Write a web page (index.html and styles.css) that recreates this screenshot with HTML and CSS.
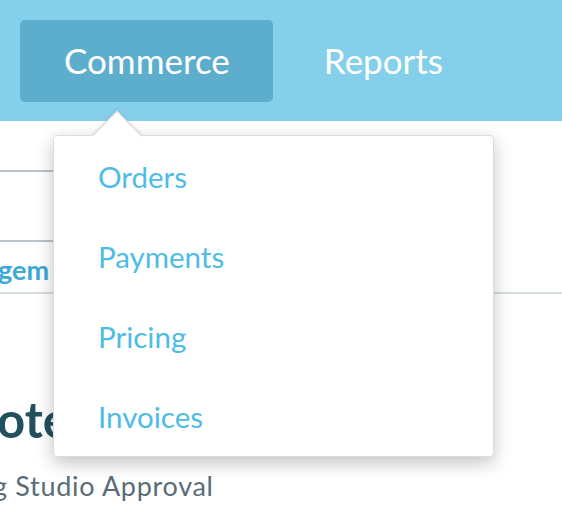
FILE: index.html
```html
<!DOCTYPE html>
<html>
<head>
<meta charset="utf-8">
<link rel="stylesheet" href="styles.css">
</head>
<body>
<header class="topbar">
  <nav class="nav">
    <a class="nav-item active">Commerce</a>
    <a class="nav-item">Reports</a>
  </nav>
</header>
<main class="page">
  <div class="toolbar"></div>
  <div class="tabs"><span class="tab">gem</span></div>
  <h1 class="title">ote</h1>
  <p class="subtitle">g Studio Approval</p>
</main>
<div class="dropdown">
  <a class="menu-item">Orders</a>
  <a class="menu-item">Payments</a>
  <a class="menu-item">Pricing</a>
  <a class="menu-item">Invoices</a>
</div>
</body>
</html>
```
FILE: styles.css
```css
* { box-sizing: border-box; }
body {
  margin: 0;
  font-family: Lato, "Open Sans", sans-serif;
  background: #fff;
  overflow: hidden;
}
.topbar {
  height: 121px;
  background: #84d0eb;
  padding: 20px 0 0 20px;
}
.nav {
  display: flex;
  gap: 7px;
}
.nav-item {
  display: block;
  height: 82px;
  line-height: 80px;
  padding: 0 43px 0 44px;
  font-size: 35px;
  color: #fff;
  border-radius: 5px;
}
.nav-item.active {
  background: #5daecc;
}
.page {
  padding-top: 49px;
}
.toolbar {
  width: 300px;
  height: 72px;
  border-top: 2px solid #b9c3c8;
  border-bottom: 2px solid #b9c3c8;
}
.tabs {
  height: 52px;
  border-bottom: 2px solid #d6dde0;
  padding-top: 12px;
}
.tab {
  display: block;
  font-size: 27px;
  font-weight: 700;
  color: #3aa8d8;
  line-height: 32px;
  text-indent: -2px;
}
.title {
  margin: 97px 0 0;
  font-size: 49px;
  font-weight: 700;
  color: #23505f;
  line-height: 56px;
  text-indent: -3px;
}
.subtitle {
  margin: 24px 0 0;
  font-size: 27px;
  letter-spacing: 0.7px;
  color: #596c77;
  line-height: 30px;
  text-indent: -7px;
}
.dropdown {
  position: absolute;
  left: 53px;
  top: 135px;
  width: 441px;
  height: 322px;
  background: #fff;
  border: 1px solid #dcdcdc;
  border-radius: 4px;
  box-shadow: 0 6px 18px rgba(0, 0, 0, 0.24);
  padding-top: 1px;
  padding-left: 44px;
}
.dropdown::before {
  content: "";
  position: absolute;
  left: 45px;
  top: -18px;
  width: 35px;
  height: 35px;
  background: #fff;
  border-top: 1px solid #d4d4d4;
  border-left: 1px solid #d4d4d4;
  transform: rotate(45deg);
  box-shadow: -2px -2px 3px rgba(0, 0, 0, 0.05);
}
.menu-item {
  position: relative;
  display: block;
  height: 80px;
  line-height: 80px;
  font-size: 29.5px;
  color: #4dbde6;
}
```
